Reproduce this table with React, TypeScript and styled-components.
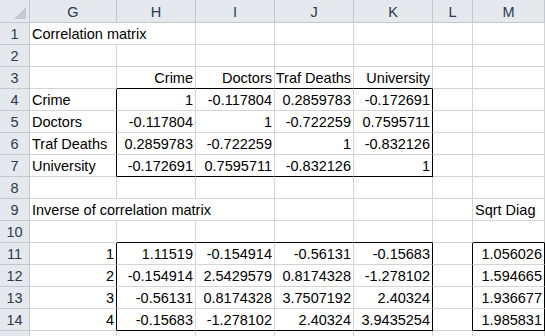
import React from "react";
import styled, { createGlobalStyle } from "styled-components";

const GlobalStyle = createGlobalStyle`
  body {
    margin: 0;
    background: #ffffff;
  }
`;

const GRID = "#d4d4d4";
const HEAD_LINE = "#c3c8cf";

const Sheet = styled.div`
  display: grid;
  grid-template-columns: 30px 87px 79px 79px 79px 79px 40px 72px;
  grid-template-rows: 23px repeat(15, 22px);
  width: 545px;
  height: 336px;
  overflow: hidden;
  background: #ffffff;
  font-family: "Liberation Sans", Arial, sans-serif;
  font-size: 14.5px;
  color: #000000;
`;

const Corner = styled.div`
  position: relative;
  background: #e5e8ec;
  border-right: 1px solid ${HEAD_LINE};
  border-bottom: 1px solid ${HEAD_LINE};

  & svg {
    position: absolute;
    right: 3px;
    bottom: 3px;
  }
`;

const ColHeader = styled.div`
  display: flex;
  align-items: center;
  justify-content: center;
  background: #e5e8ec;
  border-right: 1px solid ${HEAD_LINE};
  border-bottom: 1px solid ${HEAD_LINE};
  color: #2b3a4e;
  padding-top: 1px;
`;

const RowHeader = styled.div`
  display: flex;
  align-items: flex-end;
  justify-content: center;
  background: #e5e8ec;
  border-right: 1px solid ${HEAD_LINE};
  border-bottom: 1px solid ${HEAD_LINE};
  color: #2b3a4e;
  padding-bottom: 1px;
  line-height: 17px;
`;

const Cell = styled.div<{ $align: string; $span: number; $right: boolean; $bottom: boolean }>`
  display: flex;
  align-items: flex-end;
  justify-content: ${(p) => (p.$align === "right" ? "flex-end" : "flex-start")};
  grid-column: span ${(p) => p.$span};
  padding: 0 2px 1px 2px;
  line-height: 17px;
  white-space: nowrap;
  border-right: 1px solid ${(p) => (p.$right ? "#000000" : GRID)};
  border-bottom: 1px solid ${(p) => (p.$bottom ? "#000000" : GRID)};
`;

const columns = ["G", "H", "I", "J", "K", "L", "M"];

// cell text per row, columns G..M
const rows: string[][] = [
  ["Correlation matrix", "", "", "", "", "", ""],
  ["", "", "", "", "", "", ""],
  ["", "Crime", "Doctors", "Traf Deaths", "University", "", ""],
  ["Crime", "1", "-0.117804", "0.2859783", "-0.172691", "", ""],
  ["Doctors", "-0.117804", "1", "-0.722259", "0.7595711", "", ""],
  ["Traf Deaths", "0.2859783", "-0.722259", "1", "-0.832126", "", ""],
  ["University", "-0.172691", "0.7595711", "-0.832126", "1", "", ""],
  ["", "", "", "", "", "", ""],
  ["Inverse of correlation matrix", "", "", "", "", "", "Sqrt Diag"],
  ["", "", "", "", "", "", ""],
  ["1", "1.11519", "-0.154914", "-0.56131", "-0.15683", "", "1.056026"],
  ["2", "-0.154914", "2.5429579", "0.8174328", "-1.278102", "", "1.594665"],
  ["3", "-0.56131", "0.8174328", "3.7507192", "2.40324", "", "1.936677"],
  ["4", "-0.15683", "-1.278102", "2.40324", "3.9435254", "", "1.985831"],
  ["", "", "", "", "", "", ""],
];

// only the top few pixels of the last row are on screen
const VISIBLE_ROWS = 14;

// text that runs over the empty cells to its right
const spans: Record<string, number> = { "1-0": 2, "9-0": 3 };

// outlined ranges, rows 1-based, columns 0 = G
const boxes = [
  { r1: 4, r2: 7, c1: 1, c2: 4 },
  { r1: 11, r2: 14, c1: 1, c2: 4 },
  { r1: 11, r2: 14, c1: 6, c2: 6 },
];

const rightBlack = (r: number, c: number) =>
  boxes.some((b) => r >= b.r1 && r <= b.r2 && (c === b.c2 || c + 1 === b.c1));

const bottomBlack = (r: number, c: number) =>
  boxes.some((b) => c >= b.c1 && c <= b.c2 && (r === b.r2 || r + 1 === b.r1));

const isNumber = (v: string) => /^-?\d+(\.\d+)?$/.test(v);

const App = () => {
  return (
    <>
      <GlobalStyle />
      <Sheet>
        <Corner>
          <svg width="12" height="12" viewBox="0 0 12 12">
            <polygon points="12,0 12,12 0,12" fill="#c4c8cd" />
          </svg>
        </Corner>
        {columns.map((c) => (
          <ColHeader key={c}>{c}</ColHeader>
        ))}

        {rows.map((row, i) => {
          const r = i + 1;
          const cells: React.ReactNode[] = [];
          let c = 0;
          while (c < row.length) {
            const span = spans[`${r}-${c}`] || 1;
            const value = row[c];
            const last = c + span - 1;
            cells.push(
              <Cell
                key={c}
                $span={span}
                $align={r === 3 || isNumber(value) ? "right" : "left"}
                $right={rightBlack(r, last)}
                $bottom={bottomBlack(r, c)}
              >
                {value}
              </Cell>
            );
            c += span;
          }
          return (
            <React.Fragment key={r}>
              <RowHeader>{r <= VISIBLE_ROWS ? r : ""}</RowHeader>
              {cells}
            </React.Fragment>
          );
        })}
      </Sheet>
    </>
  );
};

export default App;
